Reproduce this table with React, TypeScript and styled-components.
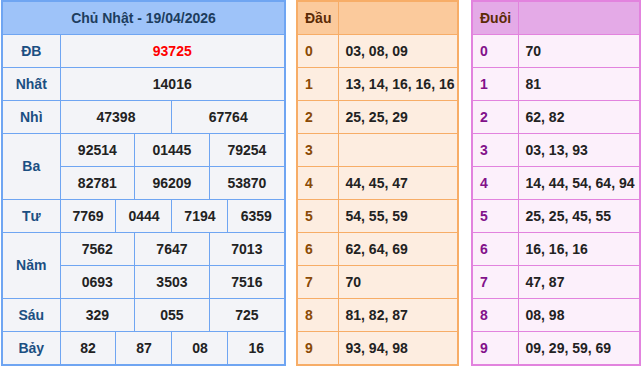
import styled, { createGlobalStyle } from 'styled-components'

const Global = createGlobalStyle`
  body {
    margin: 0;
    background: #fff;
    font-family: "Liberation Sans", Arial, sans-serif;
  }
`

const Page = styled.div`
  display: flex;
  align-items: flex-start;
  padding-left: 1px;
`

interface BoxStyle {
    $border: string;
    $width: number;
    $gap: number;
}

const Box = styled.div<BoxStyle>`
  width: ${({ $width }) => $width}px;
  margin-right: ${({ $gap }) => $gap}px;
  border: 2px solid ${({ $border }) => $border};
  box-sizing: border-box;
`

interface GridStyle {
    $line: string;
    $bg: string;
}

const Grid = styled.table<GridStyle>`
  width: 100%;
  border-collapse: collapse;
  border-style: hidden;
  table-layout: fixed;
  background: ${({ $bg }) => $bg};
  font-size: 14px;
  font-weight: bold;

  td, th {
    border: 1px solid ${({ $line }) => $line};
    height: 33px;
    padding: 0;
    box-sizing: border-box;
  }
`

const Title = styled.th`
  background: #9ec3f9;
  color: #1d3d5e;
  text-align: center;
  && { height: 32px; }
`

const Label = styled.td`
  color: #1b4f82;
  text-align: center;
`

const Num = styled.td<{ $red?: boolean }>`
  color: ${({ $red }) => $red ? '#ff0000' : '#222'};
  text-align: center;
`

const Head = styled.th<{ $bg: string }>`
  background: ${({ $bg }) => $bg};
  color: #5b2b06;
  text-align: left;
  padding-left: 7px !important;
  && { height: 32px; }
`

const Digit = styled.td<{ $color: string }>`
  color: ${({ $color }) => $color};
  padding-left: 7px !important;
`

const Values = styled.td`
  color: #222;
  padding-left: 7px !important;
`

const prizes = {
    db: '93725',
    nhat: '14016',
    nhi: ['47398', '67764'],
    ba: [['92514', '01445', '79254'], ['82781', '96209', '53870']],
    tu: ['7769', '0444', '7194', '6359'],
    nam: [['7562', '7647', '7013'], ['0693', '3503', '7516']],
    sau: ['329', '055', '725'],
    bay: ['82', '87', '08', '16'],
}

const dau = ['03, 08, 09', '13, 14, 16, 16, 16', '25, 25, 29', '', '44, 45, 47', '54, 55, 59', '62, 64, 69', '70', '81, 82, 87', '93, 94, 98']
const duoi = ['70', '81', '62, 82', '03, 13, 93', '14, 44, 54, 64, 94', '25, 25, 45, 55', '16, 16, 16', '47, 87', '08, 98', '09, 29, 59, 69']

function Cells({ items, span }: { items: string[]; span: number }) {
    return <>{items.map((n, i) => <Num key={i} colSpan={span}>{n}</Num>)}</>
}

function ResultTable() {
    return (
        <Box $border="#6fa5f2" $width={285} $gap={10}>
            <Grid $line="#6fa5f2" $bg="#f3f4f8">
                <colgroup>
                    <col style={{ width: 57 }} />
                    {Array.from({ length: 12 }).map((_, i) => <col key={i} />)}
                </colgroup>
                <thead>
                    <tr><Title colSpan={13}>Chủ Nhật - 19/04/2026</Title></tr>
                </thead>
                <tbody>
                    <tr><Label>ĐB</Label><Num colSpan={12} $red>{prizes.db}</Num></tr>
                    <tr><Label>Nhất</Label><Num colSpan={12}>{prizes.nhat}</Num></tr>
                    <tr><Label>Nhì</Label><Cells items={prizes.nhi} span={6} /></tr>
                    <tr><Label rowSpan={2}>Ba</Label><Cells items={prizes.ba[0]} span={4} /></tr>
                    <tr><Cells items={prizes.ba[1]} span={4} /></tr>
                    <tr><Label>Tư</Label><Cells items={prizes.tu} span={3} /></tr>
                    <tr><Label rowSpan={2}>Năm</Label><Cells items={prizes.nam[0]} span={4} /></tr>
                    <tr><Cells items={prizes.nam[1]} span={4} /></tr>
                    <tr><Label>Sáu</Label><Cells items={prizes.sau} span={4} /></tr>
                    <tr><Label>Bảy</Label><Cells items={prizes.bay} span={3} /></tr>
                </tbody>
            </Grid>
        </Box>
    )
}

interface LotoProps {
    title: string;
    rows: string[];
    border: string;
    head: string;
    bg: string;
    digit: string;
    width: number;
    first: number;
    gap: number;
}

function LotoTable({ title, rows, border, head, bg, digit, width, first, gap }: LotoProps) {
    return (
        <Box $border={border} $width={width} $gap={gap}>
            <Grid $line={border} $bg={bg}>
                <colgroup>
                    <col style={{ width: first }} />
                    <col />
                </colgroup>
                <thead>
                    <tr><Head $bg={head}>{title}</Head><Head $bg={head}></Head></tr>
                </thead>
                <tbody>
                    {rows.map((r, i) => (
                        <tr key={i}>
                            <Digit $color={digit}>{i}</Digit>
                            <Values>{r}</Values>
                        </tr>
                    ))}
                </tbody>
            </Grid>
        </Box>
    )
}

export default function App() {
    return (
        <Page>
            <Global />
            <ResultTable />
            <LotoTable title="Đầu" rows={dau} border="#f7ad67" head="#fbca9c" bg="#fdede0" digit="#8a4a06" width={163} first={40} gap={12} />
            <LotoTable title="Đuôi" rows={duoi} border="#e283de" head="#e4aae7" bg="#fcf0fb" digit="#82118a" width={170} first={45} gap={0} />
        </Page>
    )
}
